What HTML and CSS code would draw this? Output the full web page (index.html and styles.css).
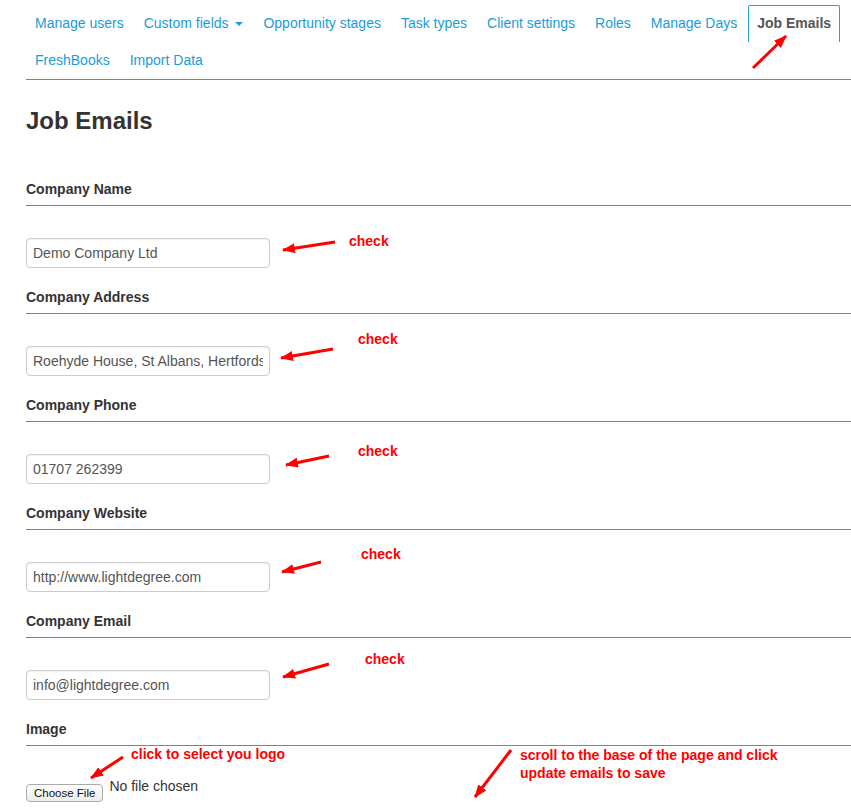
FILE: index.html
```html
<!DOCTYPE html>
<html lang="en">

<head>
  <meta charset="UTF-8" />
  <title>Job Emails</title>
  <link rel="stylesheet" href="styles.css">
</head>

<body>
  <div class="page">
    <ul class="tabs">
      <li><a href="#">Manage users</a></li>
      <li><a href="#">Custom fields <span class="caret"></span></a></li>
      <li><a href="#">Opportunity stages</a></li>
      <li><a href="#">Task types</a></li>
      <li><a href="#">Client settings</a></li>
      <li><a href="#">Roles</a></li>
      <li><a href="#">Manage Days</a></li>
      <li class="active"><a href="#">Job Emails</a></li>
      <li><a href="#">FreshBooks</a></li>
      <li><a href="#">Import Data</a></li>
    </ul>

    <h2 class="title">Job Emails</h2>

    <div class="field">
      <label>Company Name</label>
      <input type="text" class="box" value="Demo Company Ltd" />
    </div>
    <div class="field">
      <label>Company Address</label>
      <input type="text" class="box" value="Roehyde House, St Albans, Hertfordshire" />
    </div>
    <div class="field">
      <label>Company Phone</label>
      <input type="text" class="box" value="01707 262399" />
    </div>
    <div class="field">
      <label>Company Website</label>
      <input type="text" class="box" value="http://www.lightdegree.com" />
    </div>
    <div class="field">
      <label>Company Email</label>
      <input type="text" class="box" value="info@lightdegree.com" />
    </div>
    <div class="field">
      <label>Image</label>
      <div class="file-row">
        <span class="file-btn">Choose File</span>
        <span class="file-name">No file chosen</span>
      </div>
    </div>
  </div>

  <!-- red annotations drawn over the screenshot -->
  <div class="notes">
    <svg class="arrows" width="851" height="809" viewBox="0 0 851 809">
      <defs>
        <marker id="head" markerUnits="userSpaceOnUse" markerWidth="13" markerHeight="10" refX="12" refY="5" orient="auto">
          <path d="M0,0 L13,5 L0,10 Z" fill="#f00" />
        </marker>
      </defs>
      <g stroke="#f00" stroke-width="3" marker-end="url(#head)">
        <line x1="753" y1="68" x2="786" y2="36" />
        <line x1="335" y1="242" x2="283" y2="250" />
        <line x1="333" y1="349" x2="281" y2="358" />
        <line x1="329" y1="456" x2="286" y2="465" />
        <line x1="321" y1="562" x2="282" y2="572" />
        <line x1="329" y1="664" x2="283" y2="677" />
        <line x1="123" y1="757" x2="91" y2="778" />
        <line x1="511" y1="750" x2="475" y2="797" />
      </g>
    </svg>
    <span class="note" style="left:349px;top:233px">check</span>
    <span class="note" style="left:358px;top:331px">check</span>
    <span class="note" style="left:358px;top:443px">check</span>
    <span class="note" style="left:361px;top:546px">check</span>
    <span class="note" style="left:365px;top:651px">check</span>
    <span class="note" style="left:131px;top:746px">click to select you logo</span>
    <span class="note wide" style="left:520px;top:746px">scroll to the base of the page and click<br />update emails to save</span>
  </div>
</body>

</html>
```

FILE: styles.css
```css
body {
  margin: 0;
  font-family: "Liberation Sans", Arial, sans-serif;
  font-size: 14px;
  color: #333;
  background: #fff;
  position: relative;
  overflow: hidden;
}

.page {
  padding: 5px 0 0 26px;
}

/* Tabs */
.tabs {
  list-style: none;
  margin: 0;
  padding: 0;
  display: flex;
  flex-wrap: wrap;
  border-bottom: 1px solid #2a9fd6;
}

.tabs li {
  margin-right: 2px;
}

.tabs a {
  display: block;
  padding: 9px 8px 10px;
  line-height: 17px;
  color: #1a9cd8;
  text-decoration: none;
  border: 1px solid transparent;
  border-bottom: none;
  border-radius: 2px 2px 0 0;
}

.tabs .active a {
  border-color: #2a9fd6;
  color: #555;
  font-weight: bold;
}

.caret {
  display: inline-block;
  width: 0;
  height: 0;
  margin-left: 3px;
  vertical-align: middle;
  border-top: 4px solid #1a9cd8;
  border-left: 4px solid transparent;
  border-right: 4px solid transparent;
}

.title {
  margin: 28px 0 45px;
  font-size: 24px;
  line-height: 26px;
  font-weight: bold;
  color: #333;
}

/* Form fields */
.field label {
  display: block;
  font-weight: bold;
  line-height: 20px;
  padding-bottom: 6px;
  border-bottom: 1px solid #2a9fd6;
  margin-bottom: 32px;
}

.box {
  display: block;
  box-sizing: border-box;
  width: 244px;
  height: 30px;
  margin: 0 0 19px;
  padding: 6px 6px;
  border: 1px solid #ccc;
  border-radius: 4px;
  font-family: "Liberation Sans", Arial, sans-serif;
  font-size: 14px;
  color: #555;
  box-shadow: inset 0 1px 1px rgba(0, 0, 0, 0.05);
}

.file-row {
  display: flex;
  align-items: flex-start;
}

.file-btn {
  margin-top: 6px;
  box-sizing: border-box;
  height: 18px;
  padding: 0 7px;
  line-height: 16px;
  font-size: 11.5px;
  color: #111;
  border: 1px solid #aaa;
  border-radius: 4px;
  background: linear-gradient(#fff, #ededed);
}

.file-name {
  margin-left: 6px;
  line-height: 17px;
  color: #333;
}

/* Annotations */
.notes {
  position: absolute;
  top: 0;
  left: 0;
  width: 851px;
  height: 809px;
  pointer-events: none;
}

.arrows {
  position: absolute;
  top: 0;
  left: 0;
}

.note {
  position: absolute;
  font-weight: bold;
  font-size: 14px;
  line-height: 17px;
  color: #f00;
  white-space: nowrap;
}

.note.wide {
  line-height: 18px;
}
```
